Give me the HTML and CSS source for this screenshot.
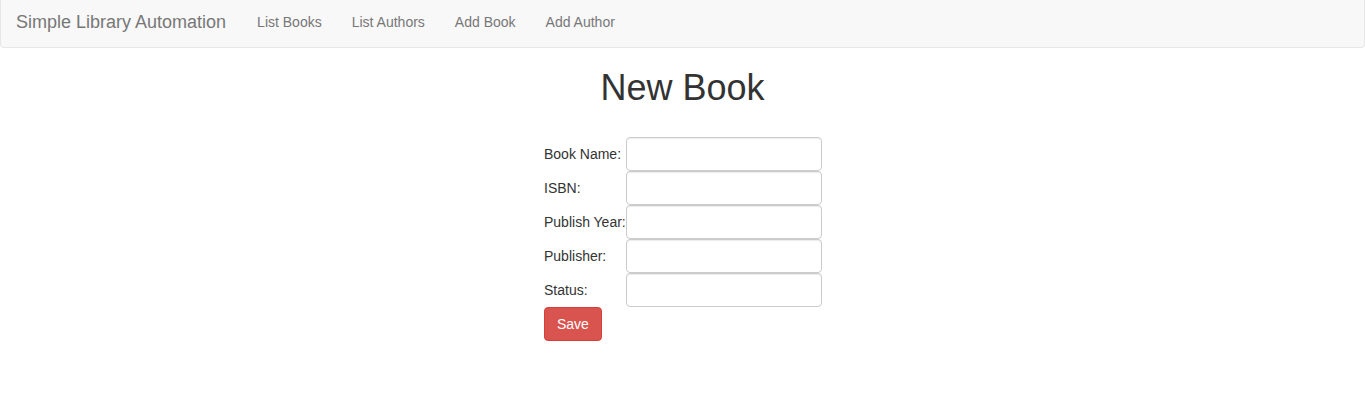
FILE: index.html
```html
<!DOCTYPE html>
<html>
<head>
<meta charset="utf-8">
<title>New Book</title>
<link rel="stylesheet" href="styles.css">
</head>
<body>
<nav class="navbar">
  <a class="brand" href="#">Simple Library Automation</a>
  <ul class="nav">
    <li><a href="#">List Books</a></li>
    <li><a href="#">List Authors</a></li>
    <li><a href="#">Add Book</a></li>
    <li><a href="#">Add Author</a></li>
  </ul>
</nav>
<main class="content">
  <h1 class="title">New Book</h1>
  <form class="book-form">
    <table class="form-table">
      <tr><td class="lbl">Book Name:</td><td><input class="field" type="text"></td></tr>
      <tr><td class="lbl">ISBN:</td><td><input class="field" type="text"></td></tr>
      <tr><td class="lbl">Publish Year:</td><td><input class="field" type="text"></td></tr>
      <tr><td class="lbl">Publisher:</td><td><input class="field" type="text"></td></tr>
      <tr><td class="lbl">Status:</td><td><input class="field" type="text"></td></tr>
      <tr><td colspan="2"><button class="btn-save" type="button">Save</button></td></tr>
    </table>
  </form>
</main>
</body>
</html>
```
FILE: styles.css
```css
* { box-sizing: border-box; }
html, body { margin: 0; padding: 0; }
body {
  font-family: "Liberation Sans", Arial, Helvetica, sans-serif;
  font-size: 14px;
  line-height: 1.42857;
  color: #333;
  background: #fff;
}
.navbar {
  display: flex;
  align-items: flex-start;
  height: 48px;
  background: #f8f8f8;
  border: 1px solid #e7e7e7;
  border-top: 0;
  border-radius: 0 0 4px 4px;
}
.brand {
  display: block;
  padding: 12px 16px 0 15px;
  font-size: 18px;
  line-height: 20px;
  color: #777;
  text-decoration: none;
}
.nav {
  display: flex;
  list-style: none;
  margin: 0;
  padding: 0;
}
.nav a {
  display: block;
  padding: 12px 15px 0 15px;
  line-height: 20px;
  font-size: 14px;
  color: #777;
  text-decoration: none;
}
.content {
  display: flex;
  flex-direction: column;
  align-items: center;
}
.title {
  margin: 20px 0 0 0;
  font-size: 36px;
  font-weight: 500;
  line-height: 1.1;
  color: #333;
}
.book-form {
  margin-top: 29px;
  margin-left: 1px;
}
.form-table {
  border-collapse: collapse;
}
.form-table td {
  padding: 0;
  vertical-align: middle;
}
.form-table td.lbl {
  white-space: nowrap;
  width: 82px;
  padding: 2px 0 0 0;
}
.field {
  display: block;
  width: 196px;
  height: 34px;
  padding: 6px 12px;
  font-family: inherit;
  font-size: 14px;
  color: #555;
  background: #fff;
  border: 1px solid #ccc;
  border-radius: 4px;
  box-shadow: inset 0 1px 1px rgba(0,0,0,.075);
}
.btn-save {
  display: block;
  height: 34px;
  padding: 6px 12px;
  font-family: inherit;
  font-size: 14px;
  line-height: 20px;
  color: #fff;
  background: #d9534f;
  border: 1px solid #d43f3a;
  border-radius: 4px;
}
```
